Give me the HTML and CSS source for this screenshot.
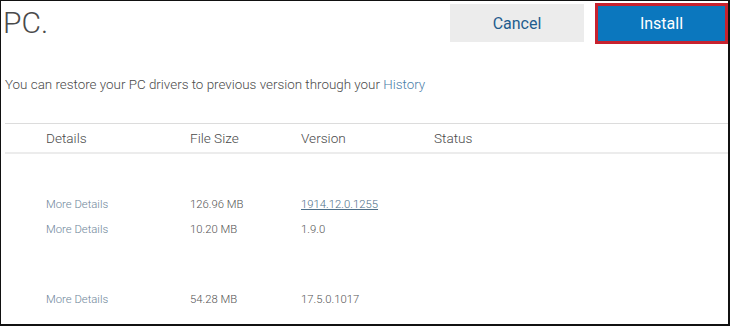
FILE: index.html
```html
<!DOCTYPE html>
<html lang="en">
<head>
    <meta charset="UTF-8">
    <title>Driver Update - Install</title>
    <link rel="stylesheet" href="styles.css">
</head>
<body>
    <div class="frame">

        <div class="top-bar">
            <h1 class="title">PC.</h1>
            <div class="actions">
                <button class="btn btn-cancel">Cancel</button>
                <button class="btn btn-install">Install</button>
            </div>
        </div>

        <p class="restore">You can restore your PC drivers to previous version through your <a href="#" class="history">History</a></p>

        <div class="table">
            <div class="row head">
                <span>Details</span>
                <span>File Size</span>
                <span>Version</span>
                <span>Status</span>
            </div>

            <div class="row item first">
                <a href="#" class="more">More Details</a>
                <span>126.96 MB</span>
                <a href="#" class="version-link">1914.12.0.1255</a>
                <span></span>
            </div>
            <div class="row item">
                <a href="#" class="more">More Details</a>
                <span>10.20 MB</span>
                <span>1.9.0</span>
                <span></span>
            </div>
            <div class="row item gap">
                <a href="#" class="more">More Details</a>
                <span>54.28 MB</span>
                <span>17.5.0.1017</span>
                <span></span>
            </div>
        </div>

    </div>
</body>
</html>
```

FILE: styles.css
```css
body {
    margin: 0;
    font-family: Roboto, "Liberation Sans", Arial, sans-serif;
    background-color: #fff;
}

/* marco negro de la captura */
.frame {
    width: 730px;
    height: 326px;
    box-sizing: border-box;
    border-top: 1px solid #111;
    border-left: 1px solid #111;
    border-right: 2px solid #111;
    border-bottom: 2px solid #111;
    overflow: hidden;
}

.top-bar {
    display: flex;
    justify-content: space-between;
    align-items: flex-start;
    height: 46px;
}

.title {
    margin: 0;
    padding: 4px 0 0 2px;
    font-size: 30px;
    font-weight: 300;
    color: #4a4a4a;
    line-height: 36px;
}

.actions {
    display: flex;
    gap: 11px;
    padding-top: 2px;
}

.btn {
    font-family: Roboto, "Liberation Sans", Arial, sans-serif;
    font-size: 16px;
    border: none;
    cursor: pointer;
    width: 134px;
    height: 39px;
    padding: 0;
}

.btn-cancel {
    margin-top: 1px;
    height: 38px;
    background-color: #ececec;
    color: #1f5d8e;
}

.btn-install {
    height: 41px;
    width: 133px;
    background-color: #0b77be;
    color: #fff;
    border: 3px solid #c7222f;
}

.restore {
    margin: 29px 0 0 4px;
    font-size: 13.4px;
    font-weight: 300;
    color: #4a4a4a;
    line-height: 18px;
}

.history {
    color: #4a7ea8;
    text-decoration: none;
}

.table {
    margin-top: 29px;
    margin-left: 4px;
    border-top: 1px solid #dcdcdc;
}

.row {
    display: grid;
    grid-template-columns: 144px 111px 133px 1fr;
    padding-left: 41px;
    align-items: center;
}

.head {
    height: 28px;
    font-size: 13.6px;
    font-weight: 300;
    color: #4a4a4a;
    border-bottom: 2px solid #ececec;
}

.item {
    height: 25px;
    font-size: 11.3px;
    font-weight: 300;
    color: #555;
}

.item.first {
    margin-top: 38px;
}

.item.gap {
    margin-top: 45px;
}

.more {
    color: #6e8599;
    text-decoration: none;
}

.version-link {
    color: #4f7089;
    text-decoration: underline;
}
```
